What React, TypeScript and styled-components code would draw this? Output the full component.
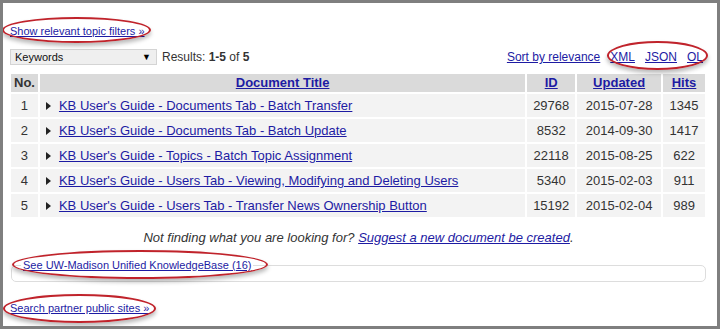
import React from "react";
import styled, { createGlobalStyle } from "styled-components";

const Global = createGlobalStyle`
  html, body { margin: 0; padding: 0; background: #ffffff; }
  body { font-family: "Liberation Sans", Arial, sans-serif; color: #333333; }
`;

const LINK = "#1d1ba3";

const Frame = styled.div`
  position: relative;
  width: 720px;
  height: 329px;
  box-sizing: border-box;
  border: 3px solid #7f7f7f;
  padding: 0 10px 0 7px;
  background: #ffffff;
  overflow: hidden;
`;

const A = styled.a<{ $bold?: boolean; $italic?: boolean }>`
  color: ${LINK};
  text-decoration: underline;
  font-weight: ${(p) => (p.$bold ? "bold" : "normal")};
  font-style: ${(p) => (p.$italic ? "italic" : "normal")};
  cursor: pointer;
`;

const SmallLinkRow = styled.div<{ $top: number }>`
  margin-top: ${(p) => p.$top}px;
  font-size: 11px;
  line-height: 14px;
  height: 14px;
`;

const Toolbar = styled.div`
  margin-top: 11px;
  height: 16px;
  display: flex;
  align-items: center;
  font-size: 12px;
`;

const SelectBox = styled.div`
  box-sizing: border-box;
  width: 147px;
  height: 16px;
  background: #efefef;
  border: 1px solid #d4d4d4;
  display: flex;
  align-items: center;
  justify-content: space-between;
  padding: 0 5px 0 4px;
  font-size: 11px;
  color: #111;
`;

const Arrow = styled.span`
  font-size: 9px;
  color: #000;
`;

const Results = styled.span`
  margin-left: 5px;
  font-size: 12px;
  color: #333;
`;

const Spacer = styled.div`
  flex: 1;
`;

const RightLinks = styled.div`
  display: flex;
  gap: 10px;
  font-size: 12px;
  margin-right: 4px;
`;

const Table = styled.table`
  margin-top: 7px;
  margin-left: -1px;
  border-collapse: separate;
  border-spacing: 2px;
  font-size: 13px;
`;

const Th = styled.th<{ $w: number; $left?: boolean }>`
  width: ${(p) => p.$w}px;
  height: 18px;
  padding: 0 3px;
  box-sizing: border-box;
  background: #dadada;
  text-align: ${(p) => (p.$left ? "left" : "center")};
  font-weight: bold;
  color: #333;
  line-height: 18px;
`;

const Td = styled.td<{ $left?: boolean }>`
  height: 23px;
  padding: 0 3px;
  background: #f3f3f3;
  text-align: ${(p) => (p.$left ? "left" : "center")};
  color: #333;
  line-height: 23px;
  white-space: nowrap;
`;

const TitleCell = styled.div`
  display: flex;
  align-items: center;
  padding-left: 3px;
`;

const Tri = styled.span`
  width: 0;
  height: 0;
  border-top: 4px solid transparent;
  border-bottom: 4px solid transparent;
  border-left: 5px solid #222;
  margin-right: 8px;
`;

const NotFinding = styled.div`
  margin-top: 11px;
  text-align: center;
  font-size: 13px;
  line-height: 16px;
  font-style: italic;
  color: #333;
`;

const Fieldset = styled.fieldset`
  margin: 12px 1px 0 1px;
  padding: 0 9px 9px;
  border: 1px solid #dddddd;
  border-radius: 5px;
  min-width: 0;
`;

const Legend = styled.legend`
  padding: 0 2px;
  font-size: 11px;
  line-height: 14px;
`;

const Ring = styled.div<{ $x: number; $y: number; $w: number; $h: number }>`
  position: absolute;
  left: ${(p) => p.$x - 3}px;
  top: ${(p) => p.$y - 3}px;
  width: ${(p) => p.$w}px;
  height: ${(p) => p.$h}px;
  box-sizing: border-box;
  border: 2px solid #c0232b;
  border-radius: 50%;
  box-shadow: 0 3px 4px rgba(0, 0, 0, 0.28);
  pointer-events: none;
`;

const Patch = styled.div`
  position: absolute;
  left: -3px;
  top: 0;
  width: 3px;
  height: 21px;
  background: #ffffff;
`;

const rows = [
  { n: 1, t: "KB User's Guide - Documents Tab - Batch Transfer", id: "29768", u: "2015-07-28", h: "1345" },
  { n: 2, t: "KB User's Guide - Documents Tab - Batch Update", id: "8532", u: "2014-09-30", h: "1417" },
  { n: 3, t: "KB User's Guide - Topics - Batch Topic Assignment", id: "22118", u: "2015-08-25", h: "622" },
  { n: 4, t: "KB User's Guide - Users Tab - Viewing, Modifying and Deleting Users", id: "5340", u: "2015-02-03", h: "911" },
  { n: 5, t: "KB User's Guide - Users Tab - Transfer News Ownership Button", id: "15192", u: "2015-02-04", h: "989" },
];

export default function App() {
  return (
    <>
      <Global />
      <Frame>
        <Patch />
        <SmallLinkRow $top={21}>
          <A>Show relevant topic filters »</A>
        </SmallLinkRow>
        <Toolbar>
          <SelectBox>
            <span>Keywords</span>
            <Arrow>▼</Arrow>
          </SelectBox>
          <Results>
            Results: <b>1-5</b> of <b>5</b>
          </Results>
          <Spacer />
          <RightLinks>
            <A>Sort by relevance</A>
            <A>XML</A>
            <A>JSON</A>
            <A>OL</A>
          </RightLinks>
        </Toolbar>
        <Table>
          <thead>
            <tr>
              <Th $w={26} $left>No.</Th>
              <Th $w={486}><A $bold>Document Title</A></Th>
              <Th $w={48}><A $bold>ID</A></Th>
              <Th $w={84}><A $bold>Updated</A></Th>
              <Th $w={42}><A $bold>Hits</A></Th>
            </tr>
          </thead>
          <tbody>
            {rows.map((r) => (
              <tr key={r.n}>
                <Td>{r.n}</Td>
                <Td $left>
                  <TitleCell>
                    <Tri />
                    <A>{r.t}</A>
                  </TitleCell>
                </Td>
                <Td>{r.id}</Td>
                <Td>{r.u}</Td>
                <Td>{r.h}</Td>
              </tr>
            ))}
          </tbody>
        </Table>
        <NotFinding>
          Not finding what you are looking for? <A $italic>Suggest a new document be created</A>.
        </NotFinding>
        <Fieldset>
          <Legend>
            <A>See UW-Madison Unified KnowledgeBase (16)</A>
          </Legend>
        </Fieldset>
        <SmallLinkRow $top={19}>
          <A>Search partner public sites »</A>
        </SmallLinkRow>
        <Ring $x={2} $y={17} $w={149} $h={26} />
        <Ring $x={607} $y={41} $w={101} $h={29} />
        <Ring $x={12} $y={250} $w={256} $h={29} />
        <Ring $x={3} $y={294} $w={153} $h={29} />
      </Frame>
    </>
  );
}
